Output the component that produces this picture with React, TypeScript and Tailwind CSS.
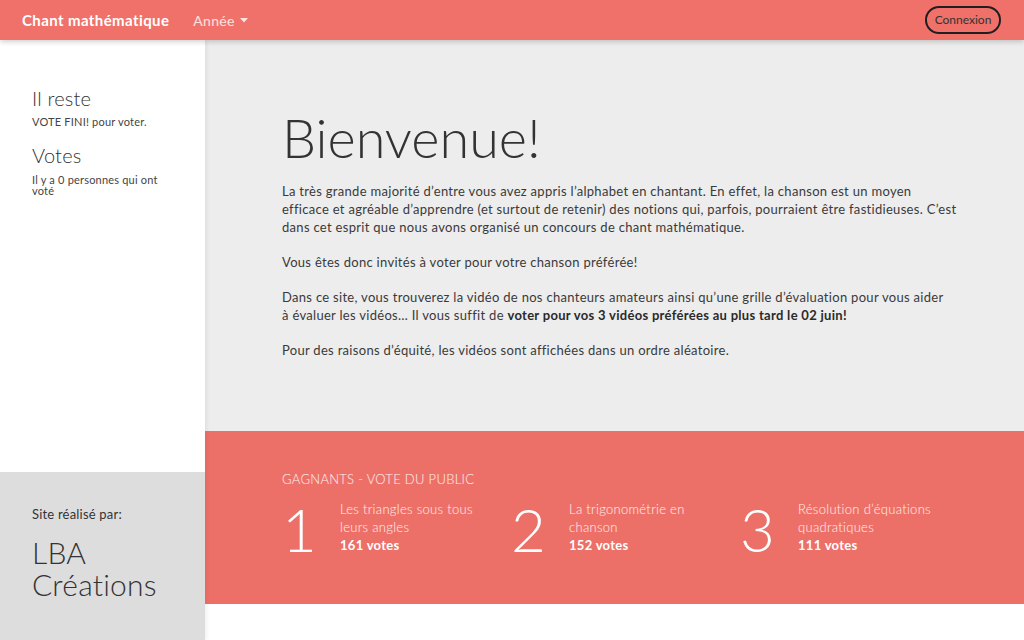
const winners = [
  { rank: '1', title: 'Les triangles sous tous leurs angles', votes: '161 votes' },
  { rank: '2', title: 'La trigonométrie en chanson', votes: '152 votes' },
  { rank: '3', title: 'Résolution d’équations quadratiques', votes: '111 votes' },
];

function Navbar() {
  return (
    <header className="relative z-20 flex h-[40px] items-center justify-between bg-[#ef7169] pl-[22px] pr-[23px] shadow-[0_2px_5px_rgba(0,0,0,0.18)]">
      <div className="flex items-center">
        <span className="text-[15px] font-bold tracking-[0.4px] text-white">Chant mathématique</span>
        <button className="ml-[24px] flex items-center gap-[5px] text-[14px] tracking-[0.3px] text-white/80">
          Année
          <svg width="8" height="5" viewBox="0 0 8 5" className="mt-[1px]">
            <path d="M0 0 L8 0 L4 4.5 Z" fill="currentColor" />
          </svg>
        </button>
      </div>
      <button className="h-[28px] w-[76px] rounded-full border-2 border-[#1f1f1f] text-[12px] text-[#333]">
        Connexion
      </button>
    </header>
  );
}

function Sidebar() {
  return (
    <aside className="relative z-10 flex w-[205px] shrink-0 flex-col tracking-[0.2px] shadow-[2px_0_4px_rgba(0,0,0,0.06)]">
      <div className="h-[432px] bg-white px-[32px] pt-[46px] text-[#333]">
        <h3 className="text-[20px] font-light leading-[24px]">Il reste</h3>
        <p className="mt-[5px] text-[11px] leading-[13px] text-[#444]">VOTE FINI! pour voter.</p>
        <h3 className="mt-[15px] text-[20px] font-light leading-[24px]">Votes</h3>
        <p className="mt-[7px] pr-[8px] text-[11px] leading-[11px] text-[#444]">
          Il y a 0 personnes qui ont voté
        </p>
      </div>
      <div className="flex-1 bg-[#dddddd] px-[32px] pt-[34px] text-[#333]">
        <p className="text-[13px] leading-[16px]">Site réalisé par:</p>
        <p className="mt-[14px] text-[30px] font-light leading-[32px]">
          LBA
          <br />
          Créations
        </p>
      </div>
    </aside>
  );
}

function Welcome() {
  return (
    <section className="h-[391px] bg-[#ededed] px-[77px] pt-[71px] text-[#333]">
      <h1 className="text-[54px] font-light leading-[54px]">Bienvenue!</h1>
      <div className="mt-[17px] flex w-[700px] flex-col gap-[17px] text-[13px] leading-[18px] tracking-[0.3px] text-[#3a3a3a]">
        <p>
          La très grande majorité d’entre vous avez appris l’alphabet en chantant. En effet, la chanson est un moyen
          <br />
          efficace et agréable d’apprendre (et surtout de retenir) des notions qui, parfois, pourraient être
          fastidieuses. C’est
          <br />
          dans cet esprit que nous avons organisé un concours de chant mathématique.
        </p>
        <p>Vous êtes donc invités à voter pour votre chanson préférée!</p>
        <p>
          Dans ce site, vous trouverez la vidéo de nos chanteurs amateurs ainsi qu’une grille d’évaluation pour vous aider
          <br />à évaluer les vidéos… Il vous suffit de{' '}
          <b className="font-bold text-[#2a2a2a]">voter pour vos 3 vidéos préférées au plus tard le 02 juin!</b>
        </p>
        <p>Pour des raisons d’équité, les vidéos sont affichées dans un ordre aléatoire.</p>
      </div>
    </section>
  );
}

function Winners() {
  return (
    <section className="h-[173px] bg-[#ed7068] px-[77px] pt-[40px] tracking-[0.3px] text-white">
      <h2 className="text-[13px] font-light uppercase leading-[16px] text-white/90">Gagnants - vote du public</h2>
      <div className="mt-[12px] flex">
        {winners.map((w) => (
          <div key={w.rank} className="flex w-[229px]">
            <span className="w-[58px] shrink-0 text-[60px] font-light leading-[60px]">{w.rank}</span>
            <div className="pr-[20px] pt-[2px]">
              <p className="text-[13px] font-light leading-[17.5px] text-white/90">{w.title}</p>
              <p className="text-[13px] font-bold leading-[18px]">{w.votes}</p>
            </div>
          </div>
        ))}
      </div>
    </section>
  );
}

export default function App() {
  return (
    <div className="flex h-[640px] w-[1024px] flex-col overflow-hidden bg-white font-['Lato',sans-serif]">
      <Navbar />
      <div className="flex flex-1">
        <Sidebar />
        <main className="flex flex-1 flex-col">
          <Welcome />
          <Winners />
          <div className="flex-1 bg-white" />
        </main>
      </div>
    </div>
  );
}
